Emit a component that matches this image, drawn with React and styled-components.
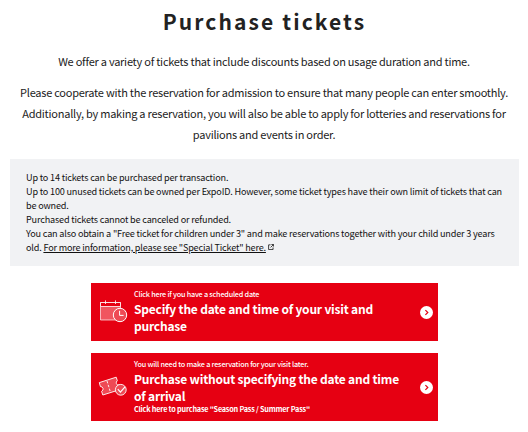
import React from 'react';
import styled, { createGlobalStyle } from 'styled-components';

const GlobalStyle = createGlobalStyle`
  body {
    margin: 0;
    background-color: #fff;
    color: #1c1c1c;
    font-family: 'Noto Sans CJK JP', 'Noto Sans', sans-serif;
  }
`;

const Page = styled.main`
  width: 528px;
  height: 432px;
  overflow: hidden;
`;

const Title = styled.h1`
  margin: 0;
  padding: 6px 0 0 1px;
  color: #222;
  font-size: 21px;
  font-weight: 700;
  line-height: 30px;
  letter-spacing: 2.1px;
  text-align: center;
`;

const Lead = styled.p`
  margin: ${({ $top }) => $top}px 0 0;
  font-size: 11px;
  line-height: 21px;
  letter-spacing: -0.245px;
  text-align: center;
  white-space: nowrap;
`;

const Notice = styled.section`
  box-sizing: border-box;
  width: 509px;
  height: 107px;
  margin: 14px 0 0 10px;
  padding: 12.4px 16px;
  background-color: #f1f2f4;
  color: #111;
  font-size: 9.1px;
  line-height: 13.9px;
  letter-spacing: -0.175px;
  white-space: nowrap;
`;

const NoticeLink = styled.a`
  color: inherit;
  text-decoration: underline;
`;

const ExternalIcon = styled.svg`
  width: 6px;
  height: 6px;
  margin: 0 0 1px 2px;
`;

const ButtonList = styled.div`
  display: flex;
  flex-direction: column;
  gap: 12px;
  width: 347px;
  margin: 17px 0 0 91px;
`;

const TicketButton = styled.a`
  box-sizing: border-box;
  display: flex;
  align-items: center;
  height: ${({ $height }) => $height}px;
  padding: 0 5px 0 7px;
  background-color: #e60012;
  color: #fff;
`;

const ButtonIcon = styled.svg`
  flex: none;
  width: 30px;
  height: 26px;
  margin-right: 6px;
`;

const ButtonBody = styled.div`
  flex: 1;
  padding-bottom: ${({ $lift }) => $lift}px;
  white-space: nowrap;
`;

const ButtonNote = styled.p`
  margin: 0;
  font-size: 7.25px;
  font-weight: ${({ $bold }) => ($bold ? 700 : 500)};
  line-height: 11px;
  letter-spacing: -0.21px;
`;

const ButtonTitle = styled.p`
  margin: 0;
  font-size: 12px;
  font-weight: 700;
  line-height: 17px;
  letter-spacing: -0.21px;
`;

const ArrowIcon = styled.svg`
  flex: none;
  width: 13px;
  height: 13px;
`;

const Arrow = () => (
  <ArrowIcon viewBox="0 0 13 13" fill="none">
    <circle cx="6.5" cy="6.5" r="6.5" fill="#fff" />
    <path d="M5.4 4.1 7.8 6.5 5.4 8.9" stroke="#e60012" strokeWidth="1.2" />
  </ArrowIcon>
);

const CalendarIcon = () => (
  <ButtonIcon viewBox="0 0 30 26" fill="none" stroke="#fff" strokeWidth="0.8">
    <path d="M2.5 3.5h20v17.5h-20z" fill="#f0555f" strokeOpacity="0.85" />
    <path d="M2.5 3.5h20v4h-20z" fill="#e60012" />
    <path d="M7.5 1.4v3.6M17.5 1.4v3.6" />
    <circle cx="22" cy="16" r="6.7" fill="#ee4a55" strokeWidth="1" />
    <path d="M21.6 11.8v4.6h4" strokeWidth="1" />
  </ButtonIcon>
);

const TicketIcon = () => (
  <ButtonIcon viewBox="0 0 30 26" fill="none" stroke="#fff" strokeWidth="0.9">
    <path
      d="M1.3 8.6 18.2 3.2l1.1 3.5q-1.6 1.2-.9 3t3 1.3l1.2 4.4L4.8 21l-1.2-3.6q2-1.2 1.4-3.1t-2.6-1.7z"
      fill="#ee4a55"
    />
    <path d="m9 7 3.5 11.4" strokeDasharray="2.5 1.5" />
    <circle cx="22.8" cy="15.8" r="5.4" fill="#ee4a55" />
    <path d="m19.8 15.2 2.6 2.9 4.6-5.3" strokeWidth="1.2" />
  </ButtonIcon>
);

const App = () => (
  <>
    <GlobalStyle />
    <Page>
      <Title>Purchase tickets</Title>
      <Lead $top={15}>
        We offer a variety of tickets that include discounts based on usage duration and time.
      </Lead>
      <Lead $top={10}>
        Please cooperate with the reservation for admission to ensure that many people can enter
        smoothly.
        <br />
        Additionally, by making a reservation, you will also be able to apply for lotteries and
        reservations for
        <br />
        pavilions and events in order.
      </Lead>
      <Notice>
        Up to 14 tickets can be purchased per transaction.
        <br />
        Up to 100 unused tickets can be owned per ExpoID. However, some ticket types have their own
        limit of tickets that can
        <br />
        be owned.
        <br />
        Purchased tickets cannot be canceled or refunded.
        <br />
        You can also obtain a "Free ticket for children under 3" and make reservations together with
        your child under 3 years
        <br />
        old. <NoticeLink>For more information, please see "Special Ticket" here.</NoticeLink>
        <ExternalIcon viewBox="0 0 7 7" fill="none" stroke="#222" strokeWidth="1">
          <path d="M3 1H.7v5.5h5.2V4M4 .6h2.5V3M6.4.7 3 4" />
        </ExternalIcon>
      </Notice>
      <ButtonList>
        <TicketButton $height={58}>
          <CalendarIcon />
          <ButtonBody $lift={2}>
            <ButtonNote>Click here if you have a scheduled date</ButtonNote>
            <ButtonTitle>
              Specify the date and time of your visit and
              <br />
              purchase
            </ButtonTitle>
          </ButtonBody>
          <Arrow />
        </TicketButton>
        <TicketButton $height={68}>
          <TicketIcon />
          <ButtonBody $lift={1}>
            <ButtonNote>You will need to make a reservation for your visit later.</ButtonNote>
            <ButtonTitle>
              Purchase without specifying the date and time
              <br />
              of arrival
            </ButtonTitle>
            <ButtonNote $bold>Click here to purchase "Season Pass / Summer Pass"</ButtonNote>
          </ButtonBody>
          <Arrow />
        </TicketButton>
      </ButtonList>
    </Page>
  </>
);

export default App;
